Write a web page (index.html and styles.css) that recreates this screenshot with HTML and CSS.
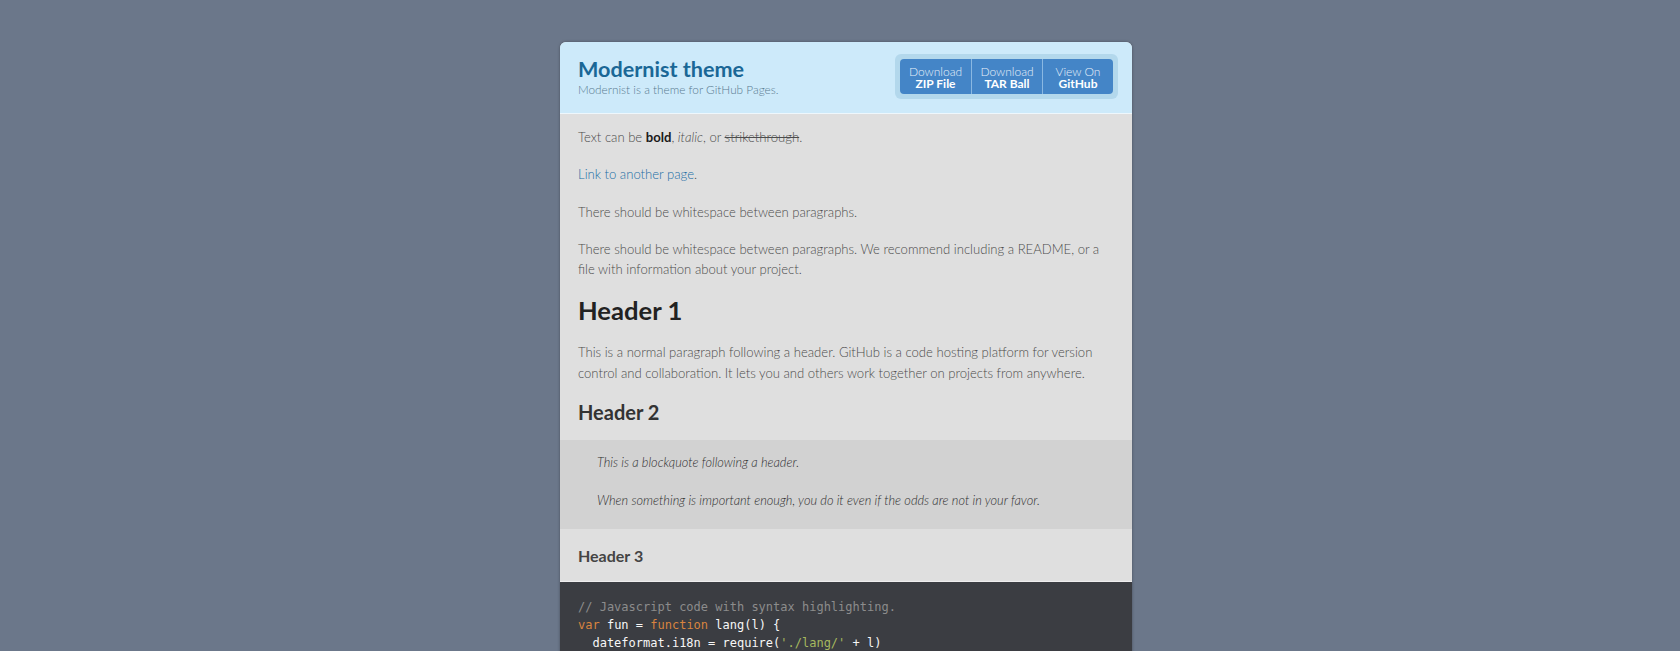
FILE: index.html
```html
<!DOCTYPE html>
<html lang="en">
<head>
<meta charset="utf-8">
<title>Modernist theme</title>
<link rel="stylesheet" href="styles.css">
</head>
<body>
<div class="wrapper">
  <header class="site-header">
    <div class="brand">
      <h1 class="site-title">Modernist theme</h1>
      <p class="site-desc">Modernist is a theme for GitHub Pages.</p>
    </div>
    <ul class="downloads">
      <li><a href="#">Download <strong>ZIP File</strong></a></li>
      <li><a href="#">Download <strong>TAR Ball</strong></a></li>
      <li><a href="#">View On <strong>GitHub</strong></a></li>
    </ul>
  </header>
  <section class="content">
    <p>Text can be <b>bold</b>, <i>italic</i>, or <s>strikethrough</s>.</p>
    <p><a href="#" class="link">Link to another page</a>.</p>
    <p>There should be whitespace between paragraphs.</p>
    <p>There should be whitespace between paragraphs. We recommend including a README, or a file with information about your project.</p>
    <h1 class="h1">Header 1</h1>
    <p>This is a normal paragraph following a header. GitHub is a code hosting platform for version control and collaboration. It lets you and others work together on projects from anywhere.</p>
    <h2 class="h2">Header 2</h2>
    <blockquote class="quote">
      <p>This is a blockquote following a header.</p>
      <p>When something is important enough, you do it even if the odds are not in your favor.</p>
    </blockquote>
    <h3 class="h3">Header 3</h3>
    <pre class="code"><span class="c">// Javascript code with syntax highlighting.</span>
<span class="k">var</span> fun = <span class="k">function</span> lang(l) {
  dateformat.i18n = require(<span class="s">'./lang/'</span> + l)
  <span class="k">return</span> <span class="k">true</span>;
}</pre>
  </section>
</div>
</body>
</html>
```
FILE: styles.css
```css
html, body {
  margin: 0;
  padding: 0;
}
body {
  background: #6b778a;
  font-family: Lato, "Open Sans", "Liberation Sans", sans-serif;
  color: #4c4c4c;
  padding-top: 42px;
}
.wrapper {
  width: 572px;
  margin: 0 auto;
  position: relative;
  left: 6px;
  background: #dfdfdf;
  border-radius: 6px 6px 0 0;
  box-shadow: 0 0 3px rgba(0,0,0,0.35);
  overflow: hidden;
}
.site-header {
  background: #cdeafa;
  display: flex;
  align-items: center;
  justify-content: space-between;
  padding: 12px 14px 14px 18px;
  border-bottom: 1px solid #eef7fc;
}
.site-title {
  margin: 0;
  font-size: 21.6px;
  line-height: 26px;
  font-weight: 700;
  color: #1a6796;
}
.site-desc {
  margin: 0;
  font-size: 11.8px;
  line-height: 16px;
  font-weight: 300;
  color: #5a7b91;
}
.downloads {
  list-style: none;
  margin: 0;
  padding: 5px;
  display: flex;
  background: #b3d8ec;
  border-radius: 6px;
}
.downloads li {
  width: 71px;
  height: 35px;
  background: #4485c7;
  border-left: 1px solid #8ab8e2;
  box-sizing: border-box;
}
.downloads li:first-child {
  border-left: none;
  border-radius: 4px 0 0 4px;
}
.downloads li:last-child {
  border-radius: 0 4px 4px 0;
}
.downloads a {
  display: flex;
  flex-direction: column;
  align-items: center;
  justify-content: center;
  height: 100%;
  padding-top: 2px;
  box-sizing: border-box;
  color: #e6f0fa;
  text-decoration: none;
  font-size: 12px;
  line-height: 12px;
  font-weight: 300;
}
.downloads strong {
  font-weight: 700;
  color: #fff;
}
.content {
  padding: 13px 0 0;
  font-size: 13.1px;
  line-height: 20.3px;
  font-weight: 300;
}
.content > p,
.content > .h1,
.content > .h2,
.content > .h3 {
  margin-left: 18px;
  margin-right: 18px;
}
.content p {
  margin-top: 0;
  margin-bottom: 17px;
}
.content b {
  font-weight: 700;
  color: #1a1a1a;
}
.link {
  color: #226ea5;
  text-decoration: none;
}
.h1 {
  font-size: 25.6px;
  line-height: 29px;
  font-weight: 700;
  color: #222;
  margin-top: 0;
  margin-bottom: 17px;
}
.h2 {
  font-size: 20px;
  line-height: 24px;
  font-weight: 700;
  color: #333;
  margin-top: 17px;
  margin-bottom: 16px;
}
.quote {
  margin: 0;
  background: #d2d2d2;
  padding: 12px 18px 18px 37px;
  font-style: italic;
  font-size: 12.8px;
  color: #2e2e2e;
}
.content .quote p {
  margin-bottom: 18px;
}
.content .quote p:last-child {
  margin-bottom: 0;
}
.h3 {
  font-size: 16px;
  line-height: 20px;
  font-weight: 700;
  color: #444;
  margin-top: 17px;
  margin-bottom: 15px;
}
.code {
  margin: 0;
  background: #3b3d42;
  border-top: 1px solid #eeeeee;
  color: #f7f7f7;
  padding: 16px 18px;
  font-family: "DejaVu Sans Mono", "Liberation Mono", monospace;
  font-size: 12px;
  line-height: 18px;
  font-weight: 400;
}
.code .c { color: #8c8c8c; }
.code .k { color: #d8843f; }
.code .s { color: #a5b95f; }
```
